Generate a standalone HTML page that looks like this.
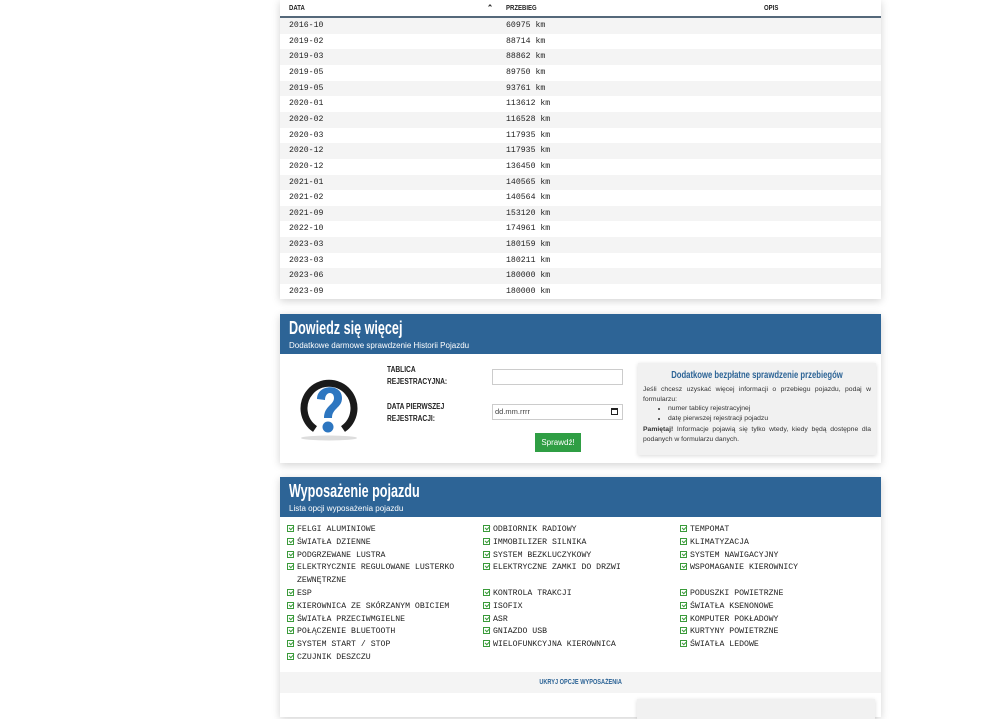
<!DOCTYPE html>
<html><head><meta charset="utf-8"><style>
*{margin:0;padding:0;box-sizing:border-box}
body{width:1000px;height:708px;background:#fff;position:relative;overflow:hidden;font-family:"Liberation Sans",sans-serif;color:#222}
.card{position:absolute;left:280px;width:601px;background:#fff;box-shadow:0 2px 8px rgba(0,0,0,.18)}
.mono{font-family:"Liberation Mono",monospace;font-size:8.2px;color:#222}
.th{position:absolute;top:0;height:17px;font-weight:bold;font-size:7.5px;line-height:16px;color:#222;transform:scaleX(.8);transform-origin:left}
.row{position:absolute;left:0;width:601px;height:15.65px;line-height:15.65px}
.row:nth-child(odd){background:#f4f4f4}
.row span{position:absolute}
.hd{background:#2d6496;color:#fff;padding:3px 9px 0}
.hd h2{font-weight:bold;font-size:18px;line-height:22px;transform:scaleX(.7);transform-origin:left;white-space:nowrap}
.hd p{font-size:8px;line-height:13px}
.lbl{position:absolute;font-weight:bold;font-size:8px;line-height:12px;transform:scaleX(.83);transform-origin:left;white-space:nowrap}
.inp{position:absolute;border:1px solid #ccc;background:#fff;height:16px}
.it{position:absolute;font-family:"Liberation Mono",monospace;font-size:8.2px;line-height:12.8px;color:#222}
.it b{display:inline-block;width:7px;height:7px;border:1px solid #3a9a3a;margin-right:3px;vertical-align:-1px;position:relative}
.it b:after{content:"";position:absolute;left:1px;top:0;width:4px;height:2px;border-left:1.5px solid #3a9a3a;border-bottom:1.5px solid #3a9a3a;transform:rotate(-45deg)}
</style></head><body>

<div class="card" style="top:0;height:299px">
 <div class="th" style="left:9px">DATA</div>
 <div class="th" style="left:207px;font-size:9px">&#8963;</div>
 <div class="th" style="left:226px">PRZEBIEG</div>
 <div class="th" style="left:484px">OPIS</div>
 <div style="position:absolute;top:16px;left:0;width:601px;height:2px;background:#55687a"></div>
 <div class="mono" style="position:absolute;top:18px;left:0;width:601px">
  <div class="row" style="top:0"><span style="left:9px">2016-10</span><span style="left:226px">60975 km</span></div>
  <div class="row" style="top:15.65px"><span style="left:9px">2019-02</span><span style="left:226px">88714 km</span></div>
  <div class="row" style="top:31.3px"><span style="left:9px">2019-03</span><span style="left:226px">88862 km</span></div>
  <div class="row" style="top:46.95px"><span style="left:9px">2019-05</span><span style="left:226px">89750 km</span></div>
  <div class="row" style="top:62.6px"><span style="left:9px">2019-05</span><span style="left:226px">93761 km</span></div>
  <div class="row" style="top:78.25px"><span style="left:9px">2020-01</span><span style="left:226px">113612 km</span></div>
  <div class="row" style="top:93.9px"><span style="left:9px">2020-02</span><span style="left:226px">116528 km</span></div>
  <div class="row" style="top:109.55px"><span style="left:9px">2020-03</span><span style="left:226px">117935 km</span></div>
  <div class="row" style="top:125.2px"><span style="left:9px">2020-12</span><span style="left:226px">117935 km</span></div>
  <div class="row" style="top:140.85px"><span style="left:9px">2020-12</span><span style="left:226px">136450 km</span></div>
  <div class="row" style="top:156.5px"><span style="left:9px">2021-01</span><span style="left:226px">140565 km</span></div>
  <div class="row" style="top:172.15px"><span style="left:9px">2021-02</span><span style="left:226px">140564 km</span></div>
  <div class="row" style="top:187.8px"><span style="left:9px">2021-09</span><span style="left:226px">153120 km</span></div>
  <div class="row" style="top:203.45px"><span style="left:9px">2022-10</span><span style="left:226px">174961 km</span></div>
  <div class="row" style="top:219.1px"><span style="left:9px">2023-03</span><span style="left:226px">180159 km</span></div>
  <div class="row" style="top:234.75px"><span style="left:9px">2023-03</span><span style="left:226px">180211 km</span></div>
  <div class="row" style="top:250.4px"><span style="left:9px">2023-06</span><span style="left:226px">180000 km</span></div>
  <div class="row" style="top:266.05px"><span style="left:9px">2023-09</span><span style="left:226px">180000 km</span></div>
 </div>
</div>

<div class="card" style="top:314px;height:149px">
 <div class="hd" style="height:40px"><h2>Dowiedz się więcej</h2><p>Dodatkowe darmowe sprawdzenie Historii Pojazdu</p></div>
 <svg style="position:absolute;left:18px;top:62px" width="62" height="66" viewBox="0 0 62 66">
  <ellipse cx="31" cy="62" rx="28" ry="2.5" fill="#ddd"/>
  <path d="M17 53 A25 25 0 1 1 45 53" fill="none" stroke="#1a1a1a" stroke-width="7"/>
  <path d="M19 23 C19 8 44 7 44 22 C44 32 34 32 34 42 L26 42 C26 30 36 29 36 22 C36 15 27 15 27 24 Z" fill="#2d76c0"/>
  <circle cx="30" cy="51" r="5.5" fill="#2d76c0"/>
 </svg>
 <div class="lbl" style="left:107px;top:50px">TABLICA<br>REJESTRACYJNA:</div>
 <div class="lbl" style="left:107px;top:87px">DATA PIERWSZEJ<br>REJESTRACJI:</div>
 <div class="inp" style="left:212px;top:55px;width:131px"></div>
 <div class="inp" style="left:212px;top:90px;width:131px;font-size:7.5px;color:#444;line-height:14px;padding-left:2px">dd.mm.rrrr<span style="position:absolute;right:4px;top:3px;width:7px;height:7px;border:1.3px solid #222;border-top-width:2.3px"></span></div>
 <div style="position:absolute;left:255px;top:119px;width:46px;height:19px;background:#2f9e44;color:#fff;font-size:8px;line-height:19px;text-align:center">Sprawdź!</div>
 <div style="position:absolute;left:358px;top:49px;width:238px;height:92px;background:#f1f1f1;box-shadow:0 1px 4px rgba(0,0,0,.15);padding:6px 5px;font-size:6.8px;line-height:9.6px;color:#333">
  <div style="text-align:center;font-weight:bold;font-size:10px;color:#2d6496;line-height:13px;margin-bottom:3px;transform:scaleX(.77);white-space:nowrap">Dodatkowe bezpłatne sprawdzenie przebiegów</div>
  <div style="text-align:justify">Jeśli chcesz uzyskać więcej informacji o przebiegu pojazdu, podaj w formularzu:</div>
  <ul style="padding-left:25px;margin-bottom:2px"><li>numer tablicy rejestracyjnej</li><li>datę pierwszej rejestracji pojadzu</li></ul>
  <div style="text-align:justify"><b>Pamiętaj!</b> Informacje pojawią się tylko wtedy, kiedy będą dostępne dla podanych w formularzu danych.</div>
 </div>
</div>

<div class="card" style="top:477px;height:240px">
 <div class="hd" style="height:40px"><h2>Wyposażenie pojazdu</h2><p>Lista opcji wyposażenia pojazdu</p></div>
 <div class="it" style="left:7px;top:47px"><div><b></b>FELGI ALUMINIOWE</div><div><b></b>ŚWIATŁA DZIENNE</div><div><b></b>PODGRZEWANE LUSTRA</div><div><b></b>ELEKTRYCZNIE REGULOWANE LUSTERKO</div><div style="padding-left:10px">ZEWNĘTRZNE</div><div><b></b>ESP</div><div><b></b>KIEROWNICA ZE SKÓRZANYM OBICIEM</div><div><b></b>ŚWIATŁA PRZECIWMGIELNE</div><div><b></b>POŁĄCZENIE BLUETOOTH</div><div><b></b>SYSTEM START / STOP</div><div><b></b>CZUJNIK DESZCZU</div></div>
 <div class="it" style="left:203px;top:47px"><div><b></b>ODBIORNIK RADIOWY</div><div><b></b>IMMOBILIZER SILNIKA</div><div><b></b>SYSTEM BEZKLUCZYKOWY</div><div><b></b>ELEKTRYCZNE ZAMKI DO DRZWI</div><div>&nbsp;</div><div><b></b>KONTROLA TRAKCJI</div><div><b></b>ISOFIX</div><div><b></b>ASR</div><div><b></b>GNIAZDO USB</div><div><b></b>WIELOFUNKCYJNA KIEROWNICA</div></div>
 <div class="it" style="left:400px;top:47px"><div><b></b>TEMPOMAT</div><div><b></b>KLIMATYZACJA</div><div><b></b>SYSTEM NAWIGACYJNY</div><div><b></b>WSPOMAGANIE KIEROWNICY</div><div>&nbsp;</div><div><b></b>PODUSZKI POWIETRZNE</div><div><b></b>ŚWIATŁA KSENONOWE</div><div><b></b>KOMPUTER POKŁADOWY</div><div><b></b>KURTYNY POWIETRZNE</div><div><b></b>ŚWIATŁA LEDOWE</div></div>
 <div style="position:absolute;left:0;top:195px;width:601px;height:21px;background:#f4f4f4;text-align:center;font-weight:bold;font-size:7px;line-height:21px;color:#2d6496"><span style="display:inline-block;transform:scaleX(.8)">UKRYJ OPCJE WYPOSAŻENIA</span></div>
 <div style="position:absolute;left:357px;top:222px;width:238px;height:20px;background:#f1f1f1;box-shadow:0 1px 4px rgba(0,0,0,.15)"></div>
</div>
</body></html>
